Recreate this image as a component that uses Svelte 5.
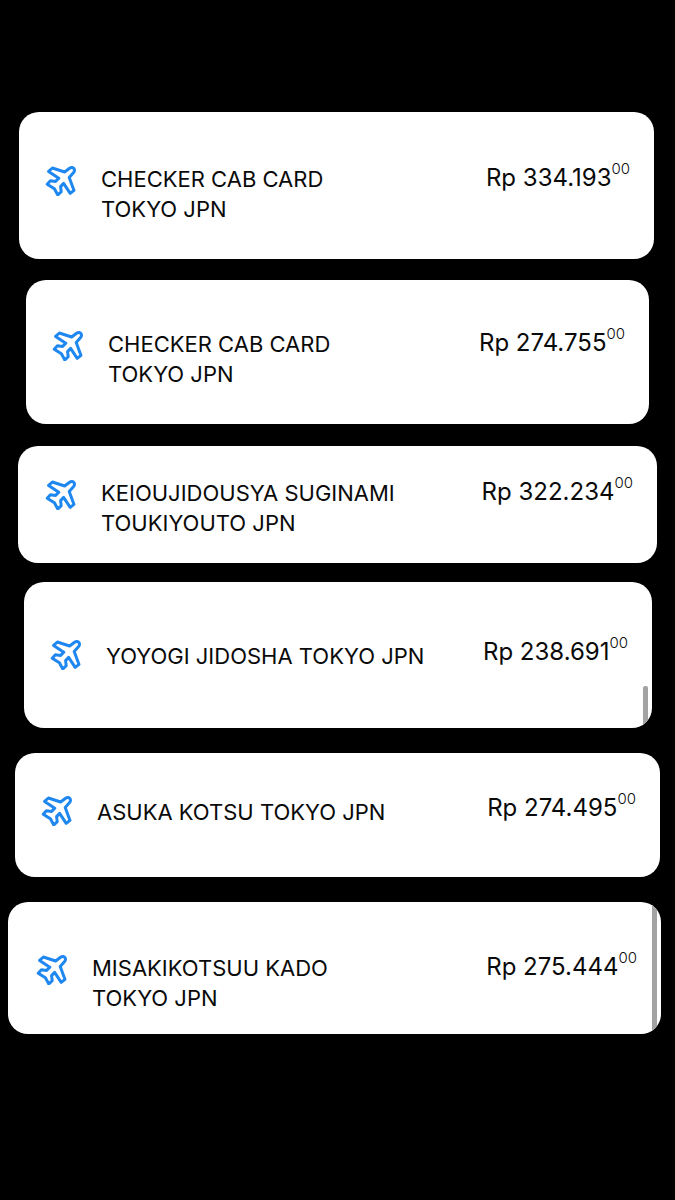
<script>
  const transactions = [
    { merchant: 'CHECKER CAB CARD TOKYO JPN', amount: '334.193' },
    { merchant: 'CHECKER CAB CARD TOKYO JPN', amount: '274.755' },
    { merchant: 'KEIOUJIDOUSYA SUGINAMI TOUKIYOUTO JPN', amount: '322.234' },
    { merchant: 'YOYOGI JIDOSHA TOKYO JPN', amount: '238.691', single: true, scroll: 'partial' },
    { merchant: 'ASUKA KOTSU TOKYO JPN', amount: '274.495', single: true },
    { merchant: 'MISAKIKOTSUU KADO TOKYO JPN', amount: '275.444', scroll: 'full' }
  ];
</script>

<main>
  <ul class="list">
    {#each transactions as t}
      <li class="card" class:single={t.single}>
        <svg class="icon" viewBox="0 0 32 32" aria-hidden="true">
          <path
            d="M3.6 7.4 L7.4 4 L19.6 8 L24.6 4.2 C26.4 3 28.4 3.4 29.2 5 C29.8 6.6 29.4 7.8 28.4 8.8 L24.2 13.4 L29 26.4 L25.2 29.4 L18.6 19.4 L15.6 22.6 L16.2 27.6 L12.8 31 L9.4 24.8 L2.2 20.2 L5.4 16.8 L10.6 17.4 L13.8 14.2 Z"
          />
        </svg>
        <p class="merchant">{t.merchant}</p>
        <p class="amount">Rp {t.amount}<sup>00</sup></p>
        {#if t.scroll}
          <span class="scrollbar {t.scroll}"></span>
        {/if}
      </li>
    {/each}
  </ul>
</main>

<style>
  :global(body) {
    margin: 0;
    background: #000;
  }

  main {
    padding: 112px 0;
    font-family: Inter, "Liberation Sans", sans-serif;
    color: #0a0a0a;
  }

  .list {
    list-style: none;
    margin: 0;
    padding: 0;
  }

  .card {
    position: relative;
    display: flex;
    align-items: flex-start;
    overflow: hidden;
    border-radius: 20px;
    background: #fff;
  }

  .card:nth-child(1) {
    margin: 0 21px 21px 19px;
    padding: 51px 24px 35px 26px;
  }

  .card:nth-child(2) {
    margin: 0 26px 22px;
    padding: 48px 24px 35px 26px;
  }

  .card:nth-child(3) {
    margin: 0 18px 19px;
    padding: 31px 24px 25px 27px;
  }

  .card:nth-child(4) {
    margin: 0 23px 25px 24px;
    padding: 55px 24px 57px 26px;
  }

  .card:nth-child(5) {
    margin: 0 15px 25px;
    padding: 40px 24px 50px 26px;
  }

  .card:nth-child(6) {
    margin: 0 14px 0 8px;
    padding: 50px 24px 21px 28px;
  }

  .icon {
    flex: none;
    width: 32px;
    height: 32px;
    margin-top: 1px;
    fill: none;
    stroke: #1f87f0;
    stroke-width: 3;
    stroke-linejoin: round;
  }

  .merchant {
    width: 300px;
    margin: 1px 0 0 24px;
    font-size: 22px;
    line-height: 30px;
  }

  .single .merchant {
    width: 320px;
    margin-top: 4px;
  }

  .amount {
    margin: 0 0 0 auto;
    font-size: 24px;
    line-height: 30px;
    white-space: nowrap;
  }

  sup {
    font-size: 15px;
    font-weight: 300;
    line-height: 0;
    vertical-align: 12px;
  }

  .scrollbar {
    position: absolute;
    right: 4px;
    bottom: 0;
    width: 5px;
    background: #a3a3a3;
  }

  .partial {
    top: 104px;
    border-radius: 2px 2px 0 0;
  }

  .full {
    top: 0;
  }
</style>
